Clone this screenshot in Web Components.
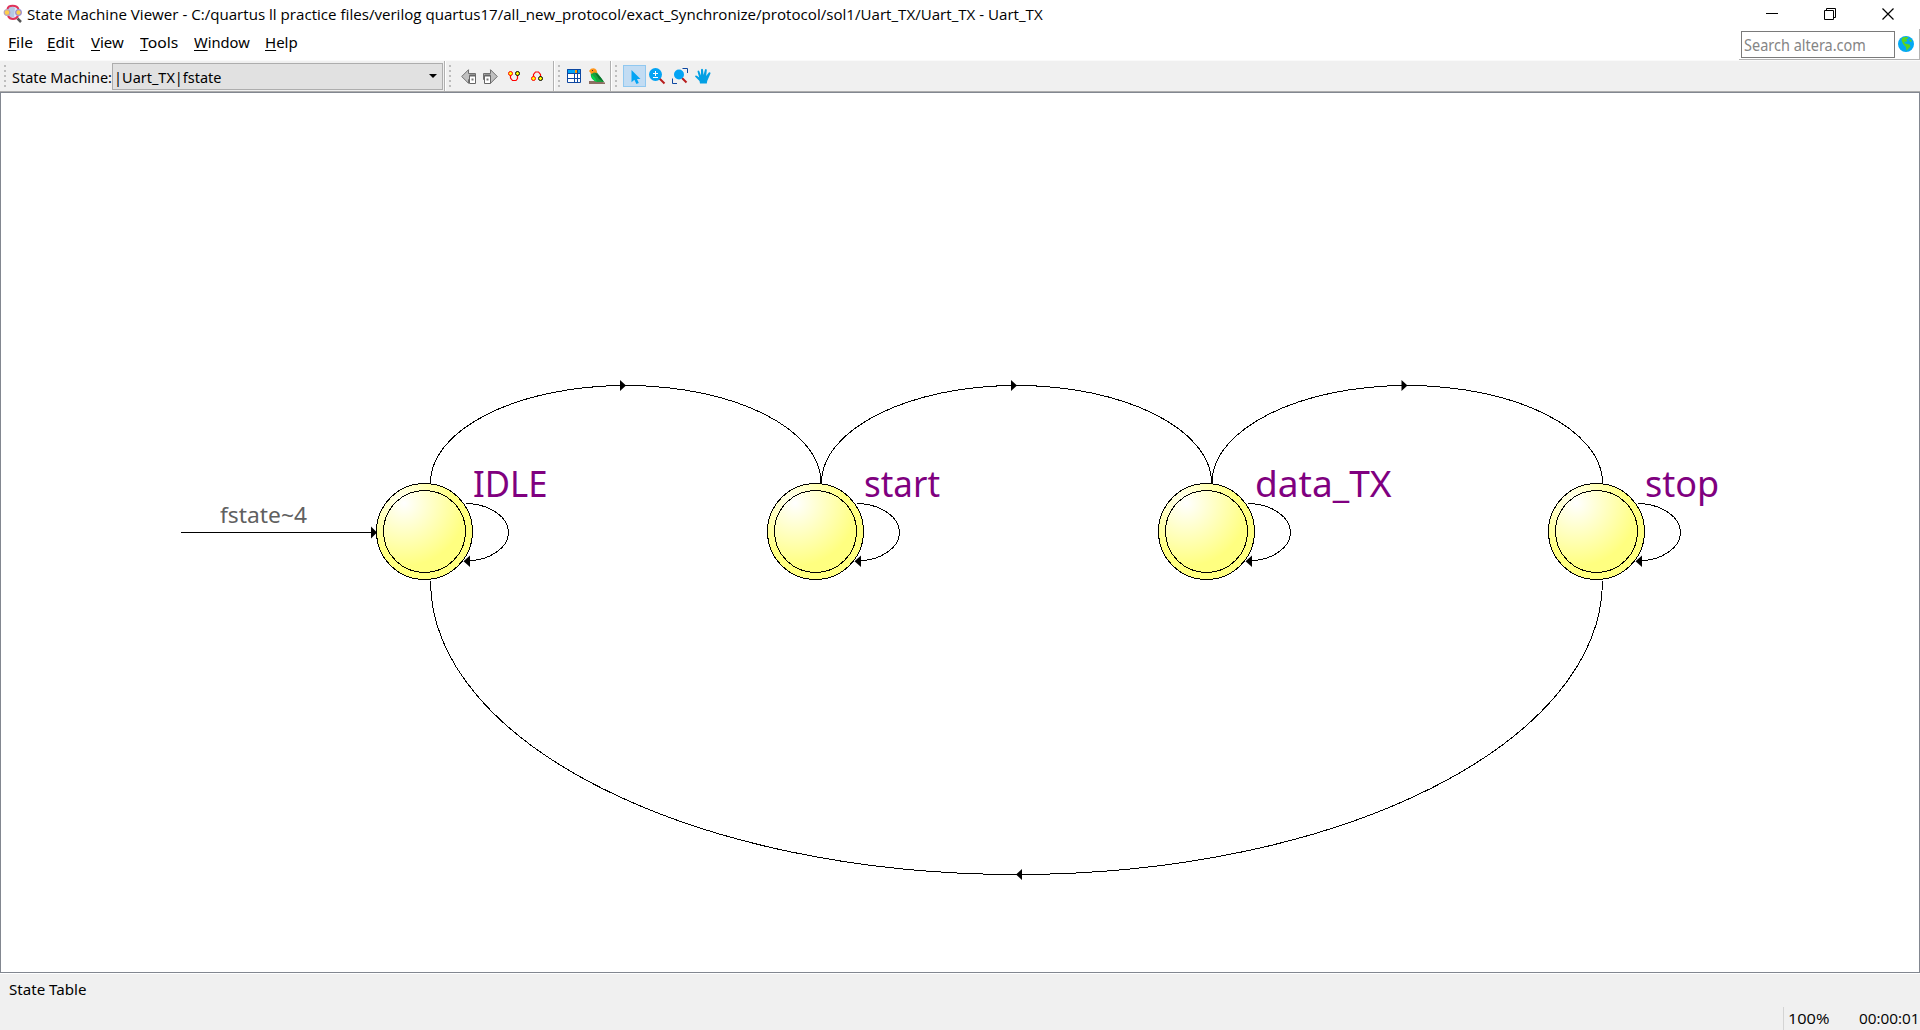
<!DOCTYPE html>
<html lang="en">
<head>
<meta charset="utf-8">
<title>State Machine Viewer</title>
<style>
html,body{margin:0;height:100%;overflow:hidden;background:#fff}
body{font:15px "Noto Sans","Open Sans",sans-serif;color:#000}
</style>
</head>
<body>
<state-viewer></state-viewer>
<script>
const define=(name,html,setup)=>customElements.define(name,class extends HTMLElement{
  connectedCallback(){
    if(this.shadowRoot)return;
    const t=document.createElement('template');
    t.innerHTML=typeof html==='function'?html(this):html;
    this.attachShadow({mode:'open'}).append(t.content.cloneNode(true));
    if(setup)setup(this,this.shadowRoot);
  }
});

/* Single-line label whose ink fills exactly the width given in "w". */
const ctx=document.createElement('canvas').getContext('2d');
define('fit-label',`<style>
:host{display:block;flex:none;white-space:pre}
span{display:inline-block;transform-origin:0 0;white-space:pre}
::slotted(u){text-decoration:underline;text-decoration-thickness:1px;text-underline-offset:2px;text-decoration-skip-ink:none}
</style><span><slot></slot></span>`,(el,root)=>{
  const cs=getComputedStyle(el),w=+el.getAttribute('w');
  ctx.font=`${cs.fontWeight} ${cs.fontSize} ${cs.fontFamily}`;
  const m=ctx.measureText(el.textContent);
  const k=w/(m.actualBoundingBoxLeft+m.actualBoundingBoxRight);
  el.style.width=w+'px';
  root.querySelector('span').style.transform=`scaleX(${k}) translateX(${m.actualBoundingBoxLeft}px)`;
});

const icons={
app:`<ellipse cx="10" cy="8" rx="7" ry="7" fill="#dfe8f4"/><path d="M5 4Q9 1 12 4L11 13Q7 14 5 12Z" fill="#b4c9e4"/><path d="M4.500 5C5 .5 14 .5 15.500 5M5 12C7 16 13 16 15 12" fill="none" stroke="#e0325a" stroke-width="2"/><circle cx="4" cy="8.500" r="2.800" fill="#ffcf4a" stroke="#b9a0b8" stroke-width="1.200"/><circle cx="15.500" cy="8.500" r="2.800" fill="#ffcf4a" stroke="#9a8bd0" stroke-width="1.200"/><path d="M14.500 14.500l3.500 3.500" stroke="#555" stroke-width="2.500"/>`,
back:`<path d="M.7 7.500L7.500.7V4.500H14.500V10.500H7.500V14.300Z" fill="#c0c0c0" stroke="#707070"/><path d="M8.500 6.500h6v8h-6z" fill="#fff" stroke="#666"/><path d="M8.500 6.500h6" stroke="#666" stroke-width="2"/><path d="M10.500 9.500h2v2h-2z" fill="#777"/>`,
fwd:`<path d="M14.300 7.500L7.500.7V4.500H.5V10.500H7.500V14.300Z" fill="#c0c0c0" stroke="#707070"/><path d="M1.500 6.500h6v8h-6z" fill="#fff" stroke="#666"/><path d="M1.500 6.500h6" stroke="#666" stroke-width="2"/><path d="M3.500 9.500h2v2h-2z" fill="#777"/>`,
down:`<path d="M2.500 4V7L4.500 9.500H8L9.500 7.500V4" fill="none" stroke="#f00" stroke-width="1.200"/><circle cx="2.500" cy="2.500" r="2" fill="#ff0" stroke="#f00"/><circle cx="9.500" cy="2.500" r="2" fill="#ff0" stroke="#000"/>`,
up:`<path d="M2.500 7V3.500L4.500 1H7.500L9.500 3.500V7" fill="none" stroke="#f00" stroke-width="1.200"/><circle cx="2.500" cy="7.500" r="2" fill="#ff0" stroke="#f00"/><circle cx="9.500" cy="7.500" r="2" fill="#ff0" stroke="#000"/>`,
table:`<path d="M.5.500h13v13H.5z" fill="#fff"/><path d="M0 0h8v4H0z" fill="#00a4f4"/><path d="M8 0h3v4H8z" fill="#ff9800"/><path d="M11 0h3v4h-3z" fill="#00a4f4"/><path d="M.5.500h13v13H.5zM0 4.500h14M0 9.500h14M7.500 4v10M10.500 0v14" fill="none" stroke="#0d47a1"/>`,
bird:`<path d="M0 13h8l8 1.500V16H0z" fill="#8d6e63"/><path d="M2 4L7 3L15 14H8C3 12 1 9 2 4Z" fill="#1b9e3e"/><path d="M6 5Q10 6 15 14L10 11Z" fill="#08752c"/><path d="M2.500 6Q6 9 8 14Q2 12 2.500 6Z" fill="#00d84a"/><path d="M0 3L2 .8Q5.500-1 7.500 2L8 5L5 4.500L2.500 6Z" fill="#ff9419"/><path d="M3 2h1v1H3z" fill="#333"/>`,
cursor:`<path d="M.5 0V12.300L3.400 9.700L5.400 14L7.800 13L6 8.900H9.500Z" fill="#03a4f4"/>`,
zoom:`<path d="M10.500 10.500L15.500 15.500" stroke="#b71c1c" stroke-width="2"/><circle cx="6.500" cy="6.500" r="6.500" fill="#03a4f4"/><path d="M4 5.500h5M6.500 3v5M4 9.500h5" stroke="#fff"/>`,
fit:`<path d="M10.500.500h5V5M.5 10.500v5H5" fill="none" stroke="#0d47a1"/><path d="M10 10l4.500 4.500" stroke="#b71c1c" stroke-width="2"/><circle cx="7" cy="6.500" r="5" fill="#03a4f4"/>`,
hand:`<path d="M5 15.500L4.500 13L0 8.500Q.4 7 2.200 8L4.200 9.500L2.500 3.500Q3 1.800 4.200 3L6 7.500L6 1.500Q7 0 8 1.500L8.500 7L10 1.500Q11.300.500 11.800 2L11.200 8L13.800 4.500Q15.500 3.800 15.500 5.500L12.200 13L11.800 15.500Z" fill="#03a0e4"/>`,
globe:`<circle cx="8" cy="8" r="8" fill="#03a9f4"/><path d="M4.500 1.500L9 .8L10.500 2L8 3.500L9.500 5L7.500 6L6 5.500L7 7.500L11.500 8.500L12.500 10.500L10 13L8.500 15L8 11L5 8L3.500 4Z" fill="#5bd41e"/><path d="M11 3.500l2 0l1 2l-2 0z" fill="#5bd41e"/>`,
min:`<path d="M0 5.500h12" stroke="#000"/>`,
restore:`<path d="M.5 2.500h9v9h-9zM2.500 2V.500h9v9H10" fill="none" stroke="#000"/>`,
close:`<path d="M.5.500l11 11M11.500.500l-11 11" stroke="#000" stroke-width="1.200"/>`
};
define('ui-icon',el=>{
  const [w,h]=(el.getAttribute('size')||'16 16').split(' ');
  return `<style>:host{display:block;flex:none;width:${w}px;height:${h}px}svg{display:block;overflow:visible}</style><svg width="${w}" height="${h}" viewBox="0 0 ${w} ${h}">${icons[el.getAttribute('name')]}</svg>`;
});

define('title-bar',`<style>
:host{display:flex;height:29px;box-sizing:border-box;line-height:29px;padding:0 26px 0 3px;font-family:"Open Sans","Noto Sans",sans-serif}
.app{margin-top:4px}fit-label{margin-left:6px}
.win{margin-left:auto;display:flex;gap:46px;padding-top:8px}
</style><ui-icon class="app" name="app" size="18 19"></ui-icon><fit-label w="1016"><slot></slot></fit-label>
<div class="win"><ui-icon name="min" size="12 12"></ui-icon><ui-icon name="restore" size="12 12"></ui-icon><ui-icon name="close" size="12 12"></ui-icon></div>`,(el,root)=>{
  const l=root.querySelector('fit-label');l.textContent=el.textContent;
  l.replaceWith(l.cloneNode(true));
});

define('menu-bar',`<style>
:host{display:flex;height:31px;box-sizing:border-box;padding-left:8.500px;line-height:27px}
nav{display:flex;gap:16px}
.search{margin-left:auto;width:181px;height:31px;box-sizing:border-box;display:flex;gap:3px;padding:2px 0 0 2px;border-right:1px solid #b4b4b4;border-bottom:1px solid #b4b4b4}
.field{box-sizing:border-box;width:154px;height:27px;border:1px solid #7a7a7a;padding-left:2px;color:#858585;line-height:27px;font-size:16px}
ui-icon{margin-top:5px}
</style><nav><fit-label w="23.500"><u>F</u>ile</fit-label><fit-label w="27"><u>E</u>dit</fit-label><fit-label w="33"><u>V</u>iew</fit-label><fit-label w="38"><u>T</u>ools</fit-label><fit-label w="56"><u>W</u>indow</fit-label><fit-label w="31.500"><u>H</u>elp</fit-label></nav>
<div class="search"><div class="field"><fit-label w="121">Search altera.com</fit-label></div><ui-icon name="globe"></ui-icon></div>`);

define('tool-group',`<style>
:host{display:flex;flex:none;height:30px;box-sizing:border-box;align-items:center;border-right:1px solid #b0b0b0;box-shadow:1px 0 #fff}
:host([last]){border:0;box-shadow:none;flex:1}
i{flex:none;width:2px;height:22px;margin-left:4px;background:repeating-linear-gradient(#bdbdbd 0 2px,transparent 2px 5px)}
</style><i></i><slot></slot>`);

define('combo-box',`<style>
:host{display:flex;box-sizing:border-box;width:331px;height:27px;border:1px solid #adadad;background:#e1e1e1;padding:0 5px 0 4px;align-items:center;justify-content:space-between}
fit-label{line-height:25px;padding-top:2px}
b{width:0;border:4px solid transparent;border-top-color:#000;border-bottom:0;height:0;margin-top:-1px}
</style><fit-label w="104">|Uart_TX|fstate</fit-label><b></b>`);

define('tool-bar',`<style>
:host{display:flex;height:32px;box-sizing:border-box;border-top:1px solid #fafafa;border-bottom:1px solid #adadad;background:#f0f0f0}
.sel{box-sizing:border-box;width:23px;height:22px;border:1px solid #90c8f0;background:#c2dcf3;padding:4px 0 0 7px;margin-left:6px}
</style>
<tool-group style="width:445px"><fit-label w="99" style="margin-left:6px;line-height:28px;padding-top:2px">State Machine:</fit-label><combo-box style="margin-left:1px"></combo-box></tool-group>
<tool-group style="width:109px"><ui-icon name="back" size="15 15" style="margin-left:10px"></ui-icon><ui-icon name="fwd" size="15 15" style="margin-left:7px"></ui-icon><ui-icon name="down" size="12 10" style="margin-left:10px"></ui-icon><ui-icon name="up" size="12 10" style="margin-left:11px"></ui-icon></tool-group>
<tool-group style="width:57px"><ui-icon name="table" size="14 14" style="margin-left:7px"></ui-icon><ui-icon name="bird" style="margin-left:8px"></ui-icon></tool-group>
<tool-group last><div class="sel"><ui-icon name="cursor" size="10 14"></ui-icon></div><ui-icon name="zoom" style="margin-left:3px"></ui-icon><ui-icon name="fit" style="margin-left:7px"></ui-icon><ui-icon name="hand" style="margin-left:7px"></ui-icon></tool-group>`);

/* A state: double ring, self-transition loop and name. */
define('fsm-state',`<style>
:host{position:absolute;width:140px;height:98px}
svg{display:block;overflow:visible}
::slotted(fit-label){position:absolute;left:98px;top:-19px;line-height:40px;font-size:36px;color:#800080}
</style><svg width="140" height="98"><defs><radialGradient id="g" gradientUnits="userSpaceOnUse" cx="28" cy="20" r="63"><stop offset="0" stop-color="#fff"/><stop offset="1" stop-color="#ffff80"/></radialGradient><radialGradient id="o" gradientUnits="userSpaceOnUse" cx="26" cy="18" r="52"><stop offset="0" stop-color="#fffff0"/><stop offset="1" stop-color="#ffff80"/></radialGradient></defs>
<g shape-rendering="crispEdges" stroke="#000"><circle cx="48.500" cy="48.500" r="48" fill="url(#o)"/><circle cx="48.500" cy="48.500" r="41" fill="url(#g)"/>
<path d="M90 20.500C114 21 132.500 34 132.500 49.500S113 77.500 93 77.500" fill="none"/></g><path d="M87.500 78.200L94 72.500V84Z"/></svg><slot></slot>`);

define('fsm-canvas',`<style>
:host{display:block;position:relative;box-sizing:border-box;height:881px;border:1px solid #828790;background:#fff;overflow:hidden}
.edges{position:absolute;left:-1px;top:-93px}
.in{position:absolute;left:218.500px;top:409.500px;line-height:24px;font-size:21px;color:#606060}
</style>
<svg class="edges" width="1920" height="1030" fill="none"><g stroke="#000" shape-rendering="crispEdges">
<path d="M181 532.500H374M430.500 483C430.500 429 518 385.500 626 385.500S821 429 821 483M821.500 483C821.500 429 909 385.500 1016.500 385.500S1211.500 429 1211.500 483M1212 483C1212 429 1299.500 385.500 1407 385.500S1602.500 429 1602.500 483"/>
<path d="M430.500 580.500C430.500 743 693 874.500 1016.500 874.500S1602.500 743 1602.500 580.500"/></g>
<path fill="#000" d="M377 532.500L371 526.500V538.500ZM626 385.500L620 380V391ZM1017 385.500L1011 380V391ZM1407.500 385.500L1401.500 380V391ZM1016 874.500L1022 869V880Z"/></svg>
<fit-label class="in" w="87">fstate~4</fit-label>
<fsm-state style="left:375px;top:390px"><fit-label w="71.500">IDLE</fit-label></fsm-state>
<fsm-state style="left:766px;top:390px"><fit-label w="75">start</fit-label></fsm-state>
<fsm-state style="left:1157px;top:390px"><fit-label w="135.500">data_TX</fit-label></fsm-state>
<fsm-state style="left:1547px;top:390px"><fit-label w="72">stop</fit-label></fsm-state>`);

define('status-bar',`<style>
:host{display:flex;flex-direction:column;justify-content:space-between;height:57px;box-sizing:border-box;border-top:1px solid #fff;background:#f0f0f0;padding:4px 3px 0 9px}
.tab{line-height:23px}.row{display:flex;justify-content:flex-end;line-height:23px;font-family:"Open Sans","Noto Sans",sans-serif}
.zoom{border-left:1px solid #d4d4d4;padding-left:5px;margin-right:30px}
</style><fit-label class="tab" w="77">State Table</fit-label><div class="row"><div class="zoom"><fit-label w="40">100%</fit-label></div><fit-label w="58">00:00:01</fit-label></div>`);

define('state-viewer',`<style>:host{display:flex;flex-direction:column;width:1920px;height:1030px}.win{}</style>
<title-bar>State Machine Viewer - C:/quartus ll practice files/verilog quartus17/all_new_protocol/exact_Synchronize/protocol/sol1/Uart_TX/Uart_TX - Uart_TX</title-bar><menu-bar></menu-bar><tool-bar></tool-bar><fsm-canvas></fsm-canvas><status-bar></status-bar>`);
</script>
</body>
</html>
